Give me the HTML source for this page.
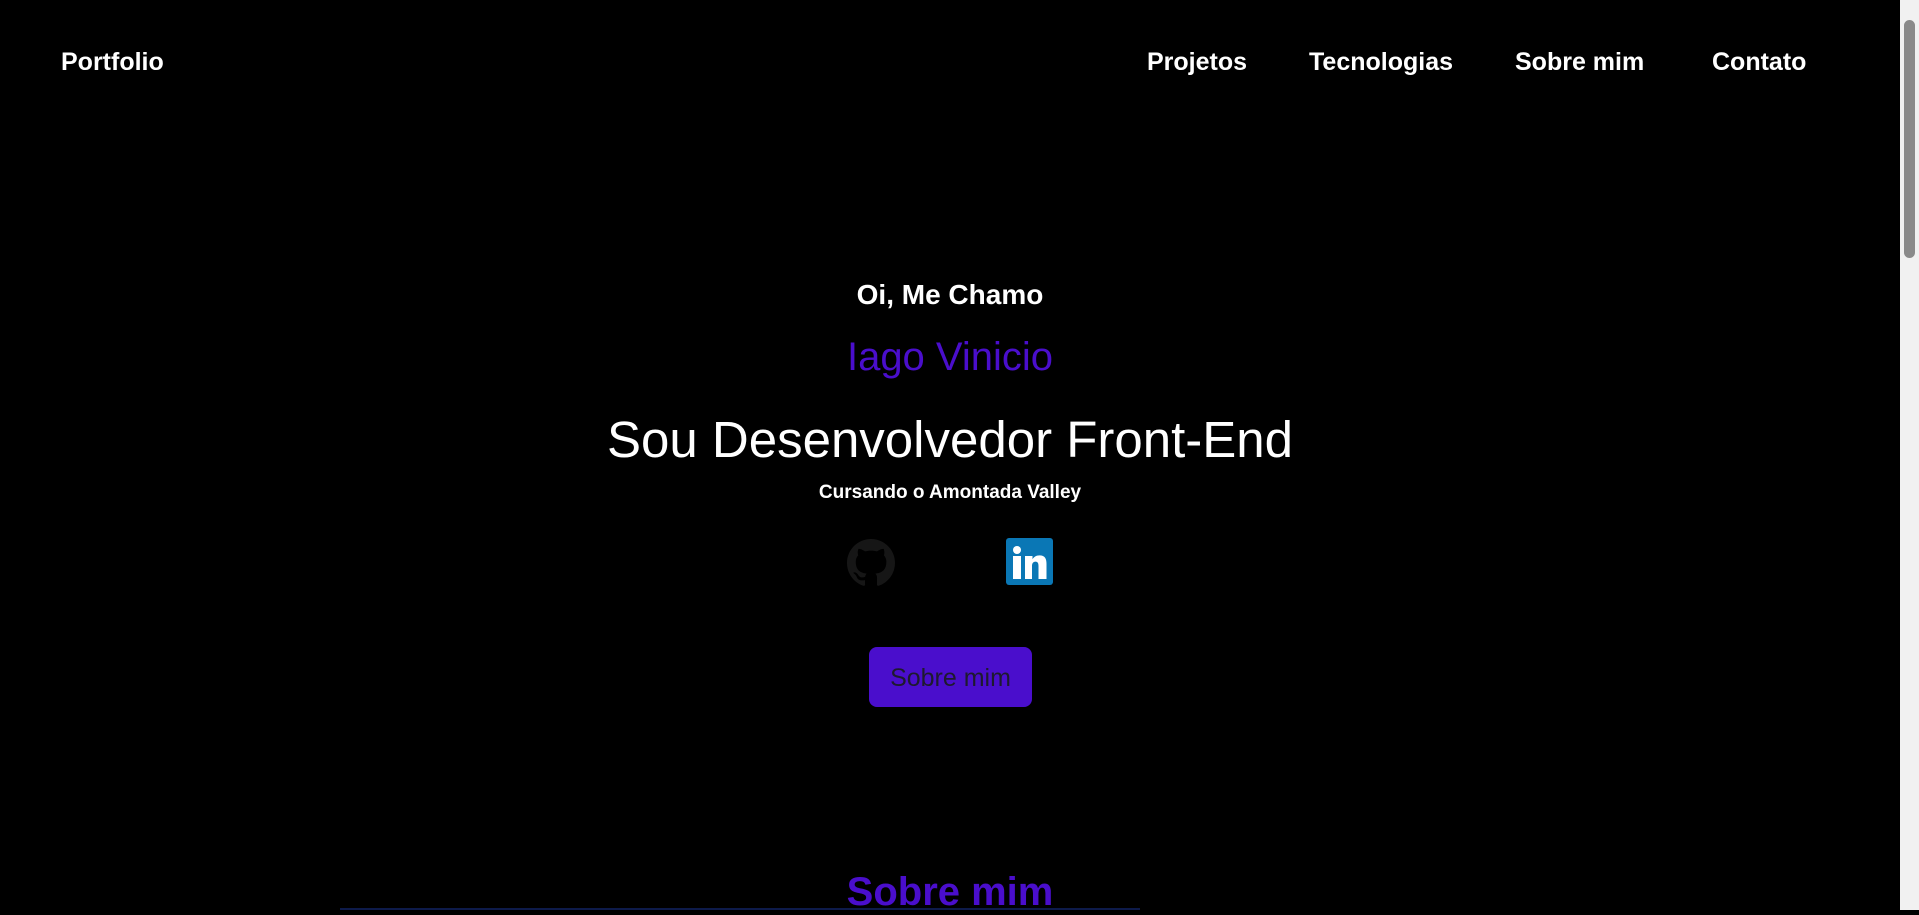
<!DOCTYPE html>
<html><head><meta charset="utf-8"><style>
html,body{margin:0;padding:0;}
body{width:1919px;height:910px;background:#000;overflow:hidden;position:relative;font-family:"Liberation Sans",sans-serif;color:#fff;}
.t{position:absolute;white-space:nowrap;}
.nav{font-size:25px;font-weight:600;top:48px;}
.c{left:0;width:1900px;text-align:center;}
.sb{position:absolute;right:0;top:0;width:19px;height:910px;background:#f1f1f1;}
.thumb{position:absolute;left:4px;top:20px;width:11px;height:238px;background:#8a8a8a;border-radius:6px;}
</style></head><body>
<div class="t nav" style="left:61px">Portfolio</div>
<div class="t nav" style="left:1147px">Projetos</div>
<div class="t nav" style="left:1309px">Tecnologias</div>
<div class="t nav" style="left:1515px">Sobre mim</div>
<div class="t nav" style="left:1712px">Contato</div>

<div class="t c" style="top:279px;font-size:28px;font-weight:bold;">Oi, Me Chamo</div>
<div class="t c" style="top:335px;font-size:40px;color:#4a0ecc;">Iago Vinicio</div>
<div class="t c" style="top:410px;font-size:51px;">Sou Desenvolvedor Front-End</div>
<div class="t c" style="top:482px;font-size:19px;font-weight:bold;">Cursando o Amontada Valley</div>

<svg style="position:absolute;left:847px;top:539px" width="48" height="48" viewBox="0 0 16 16"><path fill="#161616" d="M8 0C3.580 0 0 3.58 0 8c0 3.54 2.29 6.53 5.47 7.59.4.07.55-.17.55-.38 0-.19-.01-.82-.01-1.490-2.01.37-2.53-.49-2.69-.94-.09-.23-.48-.94-.82-1.13-.28-.15-.68-.52-.01-.53.63-.01 1.08.58 1.23.82.72 1.21 1.870.87 2.330.66.07-.52.28-.87.51-1.07-1.78-.2-3.64-.89-3.64-3.95 0-.87.31-1.59.82-2.15-.08-.2-.36-1.02.08-2.12 0 0 .67-.21 2.2.82.64-.18 1.32-.27 2-.27.68 0 1.36.09 2 .27 1.53-1.04 2.2-.82 2.2-.82.44 1.1.16 1.92.08 2.12.51.56.82 1.27.82 2.15 0 3.07-1.87 3.75-3.65 3.95.29.25.54.73.54 1.48 0 1.07-.01 1.93-.01 2.2 0 .21.15.46.55.38A8.013 8.013 0 0016 8c0-4.42-3.58-8-8-8z"/></svg>
<svg style="position:absolute;left:1006px;top:538px" width="47" height="47" viewBox="0 0 47 47"><rect width="47" height="47" rx="3" fill="#0a77b5"/><circle cx="11" cy="12" r="4" fill="#fff"/><rect x="7" y="18" width="8" height="23" fill="#fff"/><path fill="#fff" d="M19 18h7.5v3.3c1.2-2.2 3.6-3.9 7-3.9 5.6 0 7 3.6 7 8.6V41h-8V28c0-2.6-.6-4.4-3-4.4s-3.5 1.8-3.5 4.4v13H19z"/></svg>

<div style="position:absolute;left:869px;top:647px;width:163px;height:60px;background:#4a0ecc;border-radius:8px;color:#1e1a2e;font-size:25px;text-align:center;line-height:62px;">Sobre mim</div>

<div class="t c" style="top:870px;font-size:40px;font-weight:600;color:#4a0ecc;">Sobre mim</div>
<div style="position:absolute;left:340px;top:908px;width:800px;height:2px;background:#0d1a4a;"></div>

<div class="sb"><div class="thumb"></div></div>
</body></html>
